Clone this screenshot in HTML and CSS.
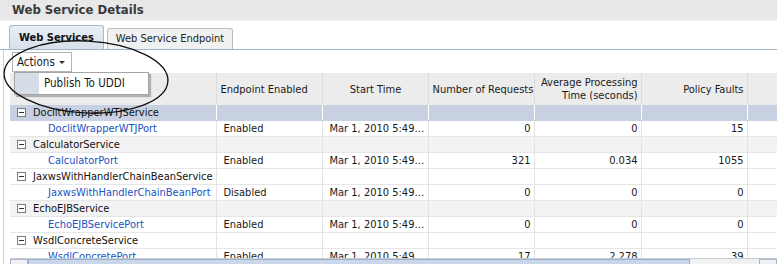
FILE: index.html
```html
<!DOCTYPE html>
<html lang="en">
<head>
    <meta charset="UTF-8">
    <title>Web Service Details</title>
    <link rel="stylesheet" href="styles.css">
</head>
<body>
    <div class="title">Web Service Details</div>

    <div class="tabs">
        <div class="tab active">Web Services</div>
        <div class="tab">Web Service Endpoint</div>
    </div>

    <div class="panel">
        <div class="toolbar">
            <div class="actions">Actions <span class="caret"></span></div>
            <div class="menu">
                <div class="menu-gutter"></div>
                <div class="menu-item">Publish To UDDI</div>
            </div>
        </div>

        <div class="grid">
            <table>
                <colgroup>
                    <col style="width:206px"><col style="width:106px"><col style="width:106px">
                    <col style="width:106px"><col style="width:107px"><col style="width:106px"><col style="width:40px">
                </colgroup>
                <thead>
                    <tr>
                        <th></th>
                        <th class="left">Endpoint Enabled</th>
                        <th class="center">Start Time</th>
                        <th>Number of Requests</th>
                        <th>Average Processing<br>Time (seconds)</th>
                        <th>Policy Faults</th>
                        <th></th>
                    </tr>
                </thead>
                <tbody>
                    <tr class="group selected">
                        <td><span class="toggle"></span>DoclitWrapperWTJService</td>
                        <td></td><td></td><td></td><td></td><td></td><td></td>
                    </tr>
                    <tr>
                        <td class="port"><a href="#">DoclitWrapperWTJPort</a></td>
                        <td class="txt">Enabled</td><td class="txt">Mar 1, 2010 5:49…</td>
                        <td class="num">0</td><td class="num">0</td><td class="num">15</td><td></td>
                    </tr>
                    <tr class="group band">
                        <td><span class="toggle"></span>CalculatorService</td>
                        <td></td><td></td><td></td><td></td><td></td><td></td>
                    </tr>
                    <tr>
                        <td class="port"><a href="#">CalculatorPort</a></td>
                        <td class="txt">Enabled</td><td class="txt">Mar 1, 2010 5:49…</td>
                        <td class="num">321</td><td class="num">0.034</td><td class="num">1055</td><td></td>
                    </tr>
                    <tr class="group">
                        <td><span class="toggle"></span>JaxwsWithHandlerChainBeanService</td>
                        <td></td><td></td><td></td><td></td><td></td><td></td>
                    </tr>
                    <tr>
                        <td class="port"><a href="#">JaxwsWithHandlerChainBeanPort</a></td>
                        <td class="txt">Disabled</td><td class="txt">Mar 1, 2010 5:49…</td>
                        <td class="num">0</td><td class="num">0</td><td class="num">0</td><td></td>
                    </tr>
                    <tr class="group band">
                        <td><span class="toggle"></span>EchoEJBService</td>
                        <td></td><td></td><td></td><td></td><td></td><td></td>
                    </tr>
                    <tr>
                        <td class="port"><a href="#">EchoEJBServicePort</a></td>
                        <td class="txt">Enabled</td><td class="txt">Mar 1, 2010 5:49…</td>
                        <td class="num">0</td><td class="num">0</td><td class="num">0</td><td></td>
                    </tr>
                    <tr class="group">
                        <td><span class="toggle"></span>WsdlConcreteService</td>
                        <td></td><td></td><td></td><td></td><td></td><td></td>
                    </tr>
                    <tr>
                        <td class="port"><a href="#">WsdlConcretePort</a></td>
                        <td class="txt">Enabled</td><td class="txt">Mar 1, 2010 5:49…</td>
                        <td class="num">17</td><td class="num">2.278</td><td class="num">39</td><td></td>
                    </tr>
                </tbody>
            </table>
        </div>

        <div class="hscroll">
            <div class="sb-btn"></div>
            <div class="sb-thumb"></div>
            <div class="sb-track"></div>
            <div class="sb-btn"></div>
        </div>
    </div>

    <!-- hand drawn callout round the Actions menu -->
    <svg class="callout" width="777" height="264">
        <ellipse cx="86" cy="77" rx="82" ry="36" transform="rotate(3 86 77)" fill="none" stroke="#111" stroke-width="1.3"/>
    </svg>
</body>
</html>
```

FILE: styles.css
```css
body {
    margin: 0;
    width: 777px;
    height: 264px;
    overflow: hidden;
    background: white;
    font-family: Tahoma, "DejaVu Sans Condensed", "Liberation Sans", sans-serif;
    font-size: 11px;
    color: #1a1a1a;
    position: relative;
}
.title {
    height: 20px;
    line-height: 19px;
    padding-left: 12px;
    background: #e8e8e8;
    border-bottom: 1px solid #f4f4f4;
    font-size: 13px;
    font-weight: bold;
    color: #3a3a3a;
}
.tabs {
    display: flex;
    align-items: flex-end;
    gap: 3px;
    margin-top: 4px;
    padding-left: 9px;
    height: 24px;
    border-bottom: 1px solid #a3b3c6;
}
.tab {
    height: 20px;
    line-height: 20px;
    padding: 0 8px;
    background: #f0f1f1;
    border: 1px solid #b9bfc4;
    border-bottom: none;
    border-radius: 3px 3px 0 0;
    font-size: 11px;
    color: #222;
}
.tab.active {
    height: 23px;
    line-height: 24px;
    padding: 0 9px;
    background: linear-gradient(#e8eef5, #d8e1eb);
    border-color: #a9b9cb;
    font-weight: bold;
    color: #111;
}
.panel {
    margin-left: 3px;
    border-left: 1px solid #cfcfcf;
    padding-left: 6px;
}
.toolbar {
    height: 23px;
    position: relative;
}
.actions {
    display: inline-block;
    margin: 2px 0 0 2px;
    height: 18px;
    line-height: 18px;
    padding: 0 6px 0 4px;
    border: 1px solid #b4b4b4;
    background: white;
    font-size: 11.5px;
}
.caret {
    display: inline-block;
    width: 0;
    height: 0;
    margin-left: 1px;
    border-left: 3px solid transparent;
    border-right: 3px solid transparent;
    border-top: 3px solid #333;
    vertical-align: middle;
}
.menu {
    position: absolute;
    left: 4px;
    top: 22px;
    width: 133px;
    height: 21px;
    display: flex;
    background: white;
    border: 1px solid #a5a5a5;
    box-shadow: 2px 2px 1px rgba(0,0,0,0.25);
    z-index: 2;
}
.menu-gutter {
    width: 24px;
    background: #d6dde7;
}
.menu-item {
    padding-left: 5px;
    line-height: 21px;
    font-size: 11.5px;
}
.grid {
    height: 185px;
    overflow: hidden;
}
table {
    border-collapse: collapse;
    table-layout: fixed;
    width: 777px;
}
th {
    height: 32px;
    padding: 0 3px 0 4px;
    background: #ececec;
    border-right: 1px solid #dcdcdc;
    font-weight: normal;
    text-align: right;
    line-height: 13px;
    white-space: nowrap;
}
th.left { text-align: left; }
th.center { text-align: center; }
td {
    height: 15px;
    padding: 0 3px 0 7px;
    border-right: 1px solid #e3e3e3;
    border-bottom: 1px solid #e6e6e6;
    white-space: nowrap;
    overflow: hidden;
    line-height: 15px;
}
td.port { padding-left: 38px; }
td.num { text-align: right; }
td.txt { text-overflow: ellipsis; }
.group td:first-child {
    padding-left: 7px;
    color: #111;
}
.band td { background: #f3f3f3; }
.selected td {
    background: #c8d1e1;
    border-right-color: white;
    border-bottom-color: #c8d1e1;
}
a {
    color: #2152c4;
    text-decoration: none;
}
.toggle {
    display: inline-block;
    position: relative;
    width: 7px;
    height: 7px;
    margin-right: 7px;
    border: 1px solid #7a7a7a;
    background: white;
    vertical-align: -1px;
}
.toggle::after {
    content: "";
    position: absolute;
    left: 1px;
    top: 3px;
    width: 5px;
    height: 1px;
    background: #333;
}
.hscroll {
    display: flex;
    height: 6px;
    border-top: 1px solid #c6ccd4;
}
.sb-btn {
    width: 16px;
    border: 1px solid #aab4c2;
    background: #eef1f5;
}
.sb-thumb {
    width: 660px;
    background: #cad6ea;
    border: 1px solid #9fb0ca;
}
.sb-track {
    flex: 1;
    background: #f1f1f1;
}
.callout {
    position: absolute;
    left: 0;
    top: 0;
    pointer-events: none;
    z-index: 3;
}
```
